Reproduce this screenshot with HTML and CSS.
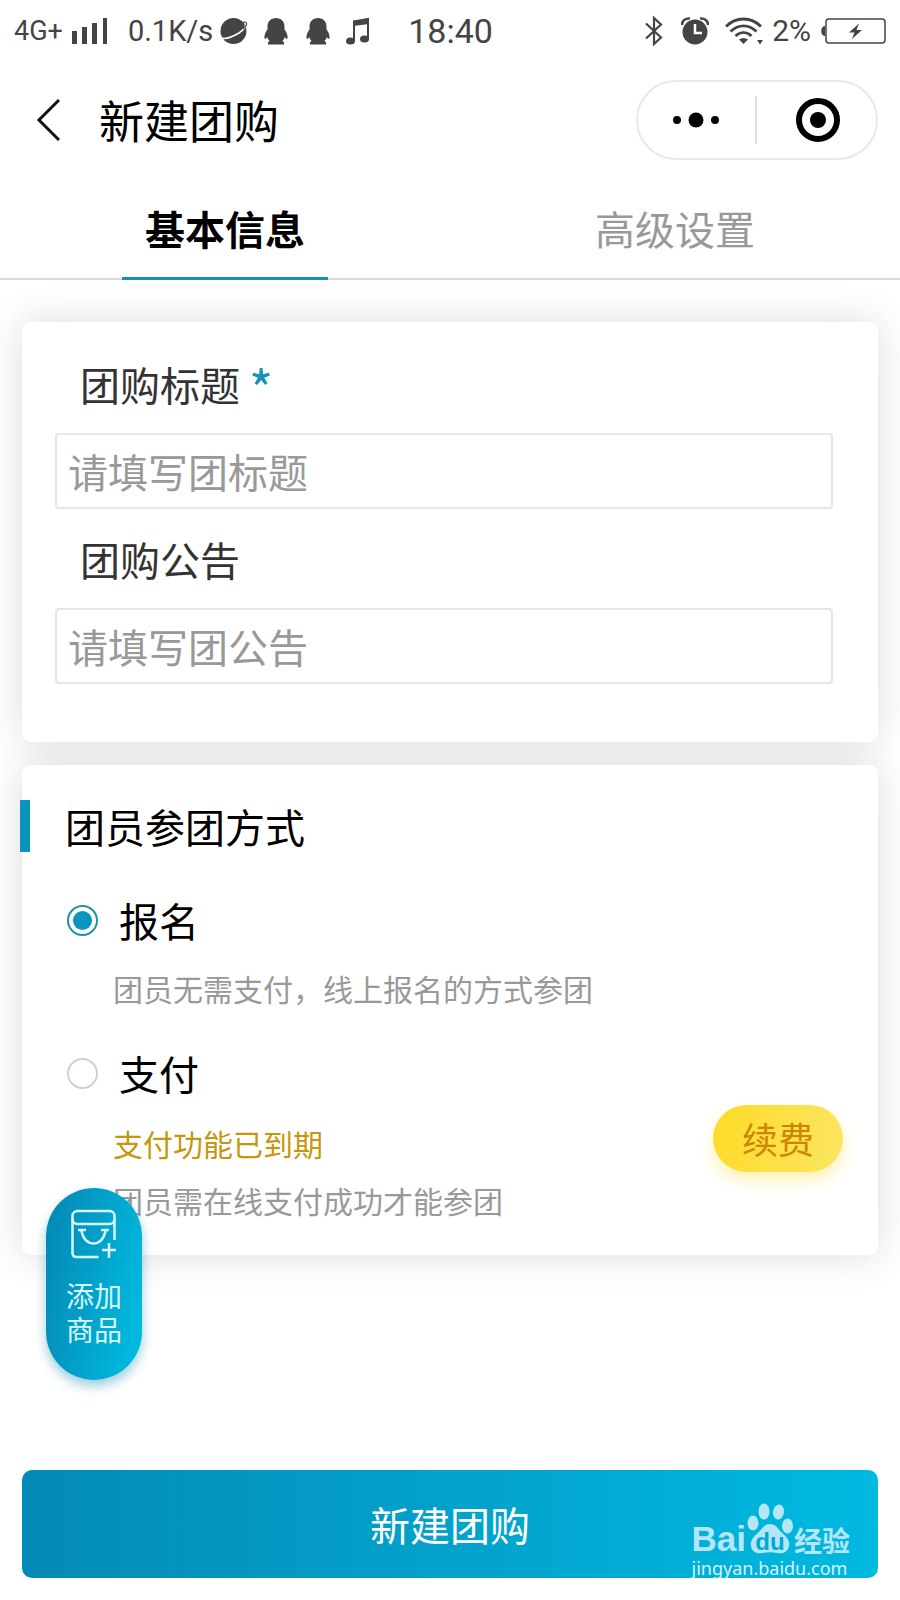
FILE: index.html
```html
<!DOCTYPE html>
<html lang="zh-CN">
<head>
    <meta charset="UTF-8">
    <meta name="viewport" content="width=device-width, initial-scale=1.0">
    <title>新建团购</title>
    <link rel="stylesheet" href="styles.css">
</head>
<body>
    <div class="status-bar">
        <div class="status-left">
            <span class="network">4G+</span>
            <svg class="signal" width="36" height="26" viewBox="0 0 36 26" fill="currentColor">
                <path d="M0 13h5v13H0zM10 9h5v17h-5zM20 5h5v21h-5zM31 0h4v26h-4z"/>
            </svg>
            <span class="speed">0.1K/s</span>
            <svg class="planet" width="28" height="28" viewBox="0 0 28 28">
                <circle cx="13.500" cy="14" r="13" fill="currentColor"/>
                <path d="M25 7c2 2-2 6.500-6 9C13 19.500 5 22.500 1 21" fill="none" stroke="#fff" stroke-width="1.600"/>
                <path d="M22 5.500c6-1.500 6 2 1 6.500" fill="none" stroke="currentColor" stroke-width="1.200"/>
            </svg>
            <svg class="penguin" width="24" height="28" viewBox="0 0 24 28" fill="currentColor">
                <path d="M12 1c5 0 8.500 3.500 8.500 8.500v3c2 2.500 3.500 6 3 9-.6 1-2-.2-2.800-1.500-.4 1.700-1.200 3-2.400 4 1.500.6 2 1.200 1.700 2.500v1H4v-1c-.3-1.300.2-1.900 1.700-2.500-1.200-1-2-2.300-2.400-4C2.500 21.300 1.100 22.500.5 21.500c-.5-3 1-6.500 3-9v-3C3.500 4.500 7 1 12 1z"/>
            </svg>
            <svg class="penguin" width="24" height="28" viewBox="0 0 24 28" fill="currentColor">
                <path d="M12 1c5 0 8.500 3.500 8.500 8.500v3c2 2.500 3.500 6 3 9-.6 1-2-.2-2.800-1.500-.4 1.700-1.200 3-2.400 4 1.500.6 2 1.200 1.700 2.500v1H4v-1c-.3-1.300.2-1.900 1.700-2.500-1.200-1-2-2.300-2.400-4C2.500 21.300 1.100 22.500.5 21.500c-.5-3 1-6.500 3-9v-3C3.500 4.500 7 1 12 1z"/>
            </svg>
            <svg class="music" width="24" height="28" viewBox="0 0 24 28">
                <path d="M8 23V5l14-3v20" fill="none" stroke="currentColor" stroke-width="2"/>
                <path d="M7 3.500 23 1v6L7 9z" fill="currentColor"/>
                <ellipse cx="4.500" cy="24" rx="4.500" ry="3.500" fill="currentColor"/>
                <ellipse cx="18.500" cy="22" rx="4.500" ry="3.500" fill="currentColor"/>
            </svg>
            <span class="clock">18:40</span>
        </div>
        <div class="status-right">
            <svg class="bluetooth" width="18" height="32" viewBox="0 0 18 32" fill="none" stroke="currentColor" stroke-width="2.200">
                <path d="M1 8.500 16 22.500 9 29V3l7 6.500L1 23.500"/>
            </svg>
            <svg class="alarm" width="28" height="28" viewBox="0 0 28 28">
                <circle cx="14" cy="15" r="12.500" fill="currentColor"/>
                <path d="M1 8C1 3 5 1 9 1.500M27 8c0-5-4-7-8-6.500" fill="none" stroke="currentColor" stroke-width="2.500"/>
                <path d="M14 7v9h7" fill="none" stroke="#fff" stroke-width="2.500"/>
            </svg>
            <svg class="wifi" width="38" height="28" viewBox="0 0 38 28" fill="none" stroke="currentColor" stroke-width="2.800">
                <path d="M1 9.500c10-10 25-10 35 0M5.500 14.500c8-7.500 18-7.500 26 0M10.500 19c5-4.500 11-4.500 16 0"/>
                <path d="M14 22.500c3-2 6-2 9 0L18.500 27zM32 23h6l-3 4.500z" fill="currentColor" stroke="none"/>
            </svg>
            <span class="percent">2%</span>
            <svg class="battery" width="65" height="26" viewBox="0 0 65 26">
                <path d="M4 8v10c-5 0-5-10 0-10z" fill="currentColor"/>
                <rect x="5" y="1" width="59" height="24" rx="3" fill="none" stroke="currentColor" stroke-width="1.500"/>
                <path d="M38 5.500 28 14.500h5.500L31 21l10-9h-5.500z" fill="currentColor"/>
            </svg>
        </div>
    </div>

    <header class="nav">
        <button class="back" type="button" aria-label="返回">
            <svg width="24" height="44" viewBox="0 0 24 44" fill="none" stroke="#111" stroke-width="3">
                <path d="M23 2 3 22l20 20"/>
            </svg>
        </button>
        <h1 class="nav-title">新建团购</h1>
        <div class="capsule">
            <button class="capsule-btn" type="button" aria-label="更多">
                <svg width="48" height="16" viewBox="0 0 48 16">
                    <circle cx="4" cy="8" r="4"/>
                    <circle cx="23" cy="8" r="7.500"/>
                    <circle cx="42" cy="8" r="4"/>
                </svg>
            </button>
            <button class="capsule-btn" type="button" aria-label="关闭">
                <svg width="44" height="44" viewBox="0 0 44 44">
                    <circle cx="22" cy="22" r="19" fill="none" stroke="#000" stroke-width="6"/>
                    <circle cx="22" cy="22" r="8"/>
                </svg>
            </button>
        </div>
    </header>

    <nav class="tabs">
        <button class="tab active" type="button">基本信息</button>
        <button class="tab" type="button">高级设置</button>
    </nav>

    <form class="form">
        <section class="card info-card">
            <label class="field-label" for="title">团购标题 <span class="required">*</span></label>
            <input class="field-input" id="title" type="text" placeholder="请填写团标题">
            <label class="field-label" for="notice">团购公告</label>
            <input class="field-input" id="notice" type="text" placeholder="请填写团公告">
        </section>

        <section class="card join-card">
            <h2 class="card-title">团员参团方式</h2>
            <div class="option">
                <div class="option-body">
                    <div class="option-row">
                        <input class="radio" type="radio" name="joinType" id="signup" checked>
                        <label for="signup">报名</label>
                    </div>
                    <p class="option-note">团员无需支付，线上报名的方式参团</p>
                </div>
            </div>
            <div class="option">
                <div class="option-body">
                    <div class="option-row">
                        <input class="radio" type="radio" name="joinType" id="pay">
                        <label for="pay">支付</label>
                    </div>
                    <p class="option-note expired">支付功能已到期</p>
                    <p class="option-note">团员需在线支付成功才能参团</p>
                </div>
                <button class="renew" type="button">续费</button>
            </div>
        </section>

        <div class="footer">
            <button class="submit" type="submit">新建团购</button>
            <div class="watermark">
                <div class="watermark-logo">
                    <span class="watermark-bai">Bai</span>
                    <span class="paw">
                        <svg width="48" height="52" viewBox="0 0 48 52" fill="currentColor">
                            <ellipse cx="7" cy="20" rx="5.500" ry="7.500"/>
                            <ellipse cx="18" cy="8.500" rx="5.500" ry="8"/>
                            <ellipse cx="32.500" cy="9" rx="5.500" ry="7.500" transform="rotate(10 32.500 9)"/>
                            <ellipse cx="41.500" cy="23" rx="5.500" ry="7.500"/>
                            <path d="M24 21c6 0 8 5 12 9 5 4 8 8 7 13-1 6-6 8-11 7-5-1-11-1-16 0-5 1-10-1-11-7-1-5 2-9 7-13 4-4 6-9 12-9z"/>
                        </svg>
                        <span class="paw-text">du</span>
                    </span>
                    <span class="watermark-jy">经验</span>
                </div>
                <div class="watermark-url">jingyan.baidu.com</div>
            </div>
        </div>
    </form>

    <button class="add-goods" type="button">
        <svg width="46" height="50" viewBox="0 0 46 50" fill="none" stroke="currentColor" stroke-width="2.500">
            <rect x="1.500" y="2" width="42" height="13" rx="5"/>
            <path d="M1.500 10v34q0 4 4 4h22M43.500 10v21"/>
            <path d="M7 21h8M30 21h8M10.500 21c2 18 22 18 24 0"/>
            <path d="M31 41h14M38 34v15"/>
        </svg>
        <span class="add-text">添加<br>商品</span>
    </button>
</body>
</html>
```
FILE: styles.css
```css
* {
    box-sizing: border-box;
}
body {
    margin: 0;
    min-height: 100vh;
    display: flex;
    flex-direction: column;
    position: relative;
    background-color: #fff;
    color: #000;
    font-family: "Noto Sans CJK SC", sans-serif;
    font-size: 40px;
    line-height: 60px;
}
h1, h2, p {
    margin: 0;
    font-weight: normal;
}
button, input {
    font: inherit;
}
button {
    padding: 0;
    border: none;
    background: none;
    color: inherit;
    cursor: pointer;
}
svg {
    display: block;
    flex: none;
}

/* Status bar */
.status-bar {
    display: flex;
    justify-content: space-between;
    align-items: center;
    height: 62px;
    padding: 0 14px;
    color: #444;
    font-family: Roboto, sans-serif;
    font-size: 29px;
    line-height: 32px;
}
.status-left, .status-right {
    display: flex;
    align-items: center;
}
.network {
    font-size: 27px;
}
.signal {
    margin-left: 9px;
}
.speed {
    margin: 0 7px 0 20px;
}
.penguin {
    margin-left: 16px;
}
.penguin + .penguin {
    margin-left: 18px;
}
.music {
    margin-left: 16px;
}
.clock {
    margin-left: 38px;
    font-size: 34px;
}
.alarm {
    margin-left: 18px;
}
.wifi {
    margin: 0 9px 0 16px;
}
.percent {
    font-size: 30px;
}
.battery {
    margin-left: 10px;
}

/* Title bar */
.nav {
    display: flex;
    align-items: center;
    height: 116px;
    padding: 0 22px 0 36px;
}
.nav-title {
    flex: 1;
    margin-left: 39px;
    font-size: 45px;
}
.capsule {
    display: flex;
    align-items: center;
    width: 242px;
    height: 80px;
    border: 2px solid #e8e8e8;
    border-radius: 40px;
}
.capsule-btn {
    flex: 1;
    display: flex;
    align-items: center;
    justify-content: center;
    height: 48px;
}
.capsule-btn + .capsule-btn {
    padding-left: 2px;
    border-left: 2px solid #ddd;
}

/* Tabs */
.tabs {
    display: flex;
    height: 102px;
    border-bottom: 2px solid #d8d8d8;
}
.tab {
    flex: 1;
    position: relative;
    color: #999;
}
.tab.active {
    color: #000;
    font-weight: bold;
}
.tab.active::after {
    content: "";
    position: absolute;
    left: 50%;
    bottom: -2px;
    width: 206px;
    height: 3px;
    margin-left: -103px;
    background-color: #1592ac;
}

/* Cards */
.form {
    flex: 1;
    display: flex;
    flex-direction: column;
    padding: 42px 22px 22px;
    position: relative;
    z-index: 0;
}
.card {
    position: relative;
    margin-bottom: 23px;
    border-radius: 9px;
    background-color: #fff;
}
/* the shadow stays below both cards */
.card::before {
    content: "";
    position: absolute;
    inset: 0;
    z-index: -1;
    border-radius: 9px;
    box-shadow: 0 0 40px rgba(0, 0, 0, 0.14);
}
.info-card {
    padding: 12px 45px 58px 33px;
}
.field-label {
    display: block;
    margin: 20px 0 19px;
    padding-left: 25px;
    color: #333;
}
.required {
    color: #1592b4;
    font-size: 52px;
    line-height: 40px;
    vertical-align: -8px;
}
.field-input {
    display: block;
    width: 100%;
    height: 76px;
    padding: 0 11px;
    border: 2px solid #e6e6e6;
    border-radius: 4px;
    background-color: #fff;
    color: #333;
    outline: none;
}
.field-input::placeholder {
    color: #999;
    opacity: 1;
}
.join-card {
    padding: 31px 35px 26px 43px;
}
.card-title {
    margin-bottom: 34px;
    font-size: 40px;
}
.card-title::before {
    content: "";
    position: absolute;
    left: -2px;
    top: 35px;
    width: 10px;
    height: 52px;
    background-color: #0995be;
}
.option {
    display: flex;
    align-items: center;
    justify-content: space-between;
    padding-left: 2px;
}
.option + .option {
    margin-top: 26px;
}
.option-row {
    display: flex;
    align-items: center;
    gap: 21px;
    margin-bottom: 10px;
}
.radio {
    appearance: none;
    width: 31px;
    height: 31px;
    margin: 0;
    padding: 4px;
    border: 2px solid #d0d0d0;
    border-radius: 50%;
}
.radio:checked {
    border-color: #1a95a8;
    background: #0995be content-box;
}
.option-note {
    padding-left: 46px;
    color: #999;
    font-size: 30px;
    line-height: 57px;
}
.option-note.expired {
    margin-top: 12px;
    color: #c8960c;
}
.renew {
    width: 130px;
    height: 67px;
    margin-top: 4px;
    border-radius: 34px;
    background: linear-gradient(100deg, #fedb28, #fbe561);
    box-shadow: 0 8px 16px rgba(253, 225, 60, 0.4);
    color: #cf8508;
    font-size: 36px;
}

/* Bottom button */
.footer {
    position: relative;
    margin-top: auto;
}
.submit {
    display: block;
    width: 100%;
    height: 108px;
    border-radius: 10px;
    background: linear-gradient(90deg, #048ab6, #00b9e0);
    color: #fff;
}
.watermark {
    position: absolute;
    right: 28px;
    bottom: -3px;
    color: #b5e6f5;
    pointer-events: none;
}
.watermark-logo {
    display: flex;
    align-items: flex-end;
    height: 52px;
}
.watermark-bai {
    font-family: "Liberation Sans", sans-serif;
    font-size: 35px;
    font-weight: bold;
    line-height: 32px;
}
.paw {
    position: relative;
}
.paw-text {
    position: absolute;
    left: 0;
    right: 0;
    bottom: 1px;
    color: #00a9d3;
    font-family: "Liberation Sans", sans-serif;
    font-size: 24px;
    font-weight: bold;
    line-height: 24px;
    text-align: center;
}
.watermark-jy {
    font-size: 28px;
    font-weight: bold;
    line-height: 30px;
}
.watermark-url {
    color: #d5f3fb;
    font-family: "Noto Sans", sans-serif;
    font-size: 18px;
    line-height: 26px;
}

/* Floating button */
.add-goods {
    position: absolute;
    left: 46px;
    bottom: 220px;
    z-index: 1;
    display: flex;
    flex-direction: column;
    align-items: center;
    gap: 19px;
    width: 96px;
    height: 192px;
    padding-top: 21px;
    border-radius: 48px;
    background: linear-gradient(100deg, #048cb8 10%, #00b9de 90%);
    box-shadow: 0 6px 12px rgba(0, 130, 170, 0.4);
    color: #d8f8ff;
}
.add-text {
    font-size: 28px;
    line-height: 34px;
}
```
